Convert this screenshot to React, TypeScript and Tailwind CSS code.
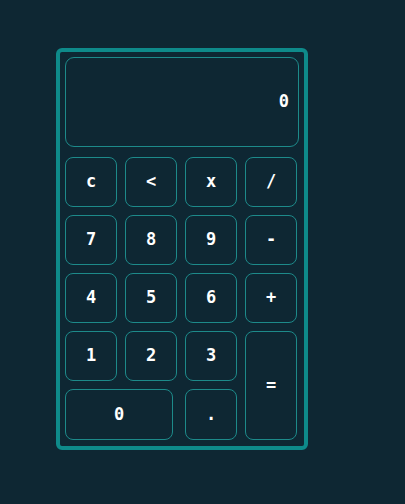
import React from "react";

const Btn = ({ label, className = "" }: { label: string; className?: string }) => (
  <button
    className={
      "flex items-center justify-center rounded-[8px] border border-[#1d8a8a] bg-transparent text-[17px] font-bold text-white " +
      className
    }
  >
    {label}
  </button>
);

export default function App() {
  return (
    <div
      className="h-[504px] w-[405px] overflow-hidden bg-[#0e2733] pl-[56px] pt-[48px]"
      style={{ fontFamily: '"DejaVu Sans Mono", "Liberation Mono", monospace' }}
    >
      <div className="h-[402px] w-[252px] rounded-[6px] border-4 border-[#0e8a8a] pl-[5px] pt-[5px]">
        <div className="flex h-[90px] w-[234px] items-center justify-end rounded-[9px] border border-[#1d8a8a] pr-[9px] text-[17px] font-bold text-white">
          0
        </div>
        <div className="mt-[10px] grid grid-cols-[52px_52px_52px_52px] grid-rows-[50px_50px_50px_50px_51px] gap-2">
          <Btn label="c" />
          <Btn label="<" />
          <Btn label="x" />
          <Btn label="/" />
          <Btn label="7" />
          <Btn label="8" />
          <Btn label="9" />
          <Btn label="-" />
          <Btn label="4" />
          <Btn label="5" />
          <Btn label="6" />
          <Btn label="+" />
          <Btn label="1" />
          <Btn label="2" />
          <Btn label="3" />
          <Btn label="=" className="row-span-2" />
          <Btn label="0" className="col-span-2 w-[108px]" />
          <Btn label="." />
        </div>
      </div>
    </div>
  );
}
